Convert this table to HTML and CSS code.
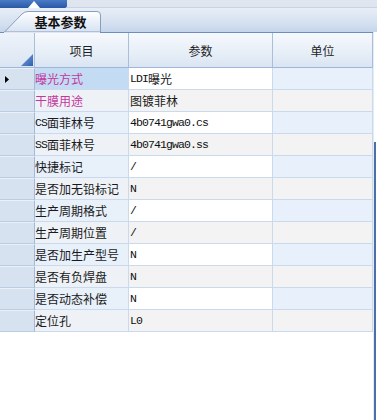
FILE: index.html
```html
<!DOCTYPE html>
<html lang="zh">
<head>
<meta charset="utf-8">
<link rel="stylesheet" href="styles.css">
</head>
<body>
<div class="page">
  <div class="topbar">
    <div class="topbar-blue">
      <svg class="tri" width="12" height="7" viewBox="0 0 12 7"><polygon points="6,0 12,7 0,7" fill="#ffffff"/></svg>
    </div>
    <div class="topbar-rest"></div>
  </div>
  <div class="tabstrip">
    <div class="tab">
      <svg class="tab-shape" width="97" height="21" viewBox="0 0 97 21">
        <defs>
          <linearGradient id="tg" x1="0" y1="0" x2="0" y2="1">
            <stop offset="0" stop-color="#ffffff"/>
            <stop offset="1" stop-color="#d6e2f2"/>
          </linearGradient>
        </defs>
        <path d="M0.5 21 L18 3 Q20.5 0.5 24 0.5 L93 0.5 Q96.5 0.5 96.5 4 L96.5 21 Z" fill="url(#tg)" stroke="#8a9dba" stroke-width="1"/>
      </svg>
      <span class="tab-label">基本参数</span>
    </div>
  </div>
  <div class="body">
    <div class="gridwrap">
      <div class="topline"></div>
      <div class="grid">
        <div class="hc corner"><svg width="12" height="12" viewBox="0 0 12 12" class="corner-tri"><defs><linearGradient id="cg" x1="0" y1="0" x2="1" y2="1"><stop offset="0" stop-color="#7fa6de"/><stop offset="1" stop-color="#2f5fae"/></linearGradient></defs><polygon points="12,0 12,12 0,12" fill="url(#cg)"/></svg></div>
        <div class="hc">项目</div>
        <div class="hc">参数</div>
        <div class="hc">单位</div>

        <div class="rh"><svg width="4" height="7" viewBox="0 0 4 7"><polygon points="0,0 4,3.5 0,7" fill="#000"/></svg></div>
        <div class="c k sel mag">曝光方式</div>
        <div class="c v"><span class="m">LDI</span>曝光</div>
        <div class="c u"></div>

        <div class="rh"></div>
        <div class="c k alt mag">干膜用途</div>
        <div class="c v alt">图镀菲林</div>
        <div class="c u alt"></div>

        <div class="rh"></div>
        <div class="c k"><span class="m">CS</span>面菲林号</div>
        <div class="c v"><span class="m">4b0741gwa0.cs</span></div>
        <div class="c u"></div>

        <div class="rh"></div>
        <div class="c k alt"><span class="m">SS</span>面菲林号</div>
        <div class="c v alt"><span class="m">4b0741gwa0.ss</span></div>
        <div class="c u alt"></div>

        <div class="rh"></div>
        <div class="c k">快捷标记</div>
        <div class="c v"><span class="m">/</span></div>
        <div class="c u"></div>

        <div class="rh"></div>
        <div class="c k alt">是否加无铅标记</div>
        <div class="c v alt"><span class="m">N</span></div>
        <div class="c u alt"></div>

        <div class="rh"></div>
        <div class="c k">生产周期格式</div>
        <div class="c v"><span class="m">/</span></div>
        <div class="c u"></div>

        <div class="rh"></div>
        <div class="c k alt">生产周期位置</div>
        <div class="c v alt"><span class="m">/</span></div>
        <div class="c u alt"></div>

        <div class="rh"></div>
        <div class="c k">是否加生产型号</div>
        <div class="c v"><span class="m">N</span></div>
        <div class="c u"></div>

        <div class="rh"></div>
        <div class="c k alt">是否有负焊盘</div>
        <div class="c v alt"><span class="m">N</span></div>
        <div class="c u alt"></div>

        <div class="rh"></div>
        <div class="c k">是否动态补偿</div>
        <div class="c v"><span class="m">N</span></div>
        <div class="c u"></div>

        <div class="rh"></div>
        <div class="c k alt">定位孔</div>
        <div class="c v alt"><span class="m">L0</span></div>
        <div class="c u alt"></div>
      </div>
    </div>
    <div class="edge"><div class="edge-line"></div></div>
  </div>
</div>
</body>
</html>
```

FILE: styles.css
```css
html, body {
  margin: 0;
  padding: 0;
  background: #ffffff;
}
.page {
  width: 377px;
  height: 420px;
  overflow: hidden;
  display: flex;
  flex-direction: column;
  font-family: "Noto Sans CJK SC", "Liberation Sans", sans-serif;
  font-size: 12px;
  color: #1a1a1a;
}
.topbar {
  height: 8px;
  display: flex;
}
.topbar-blue {
  width: 67px;
  background: linear-gradient(#4a7cc6, #2a58a6);
  border-bottom-right-radius: 2px;
  display: flex;
  justify-content: center;
  align-items: flex-end;
}
.tri {
  display: block;
}
.topbar-rest {
  flex: 1;
  background: #dfe6ef;
  border-bottom: 1px solid #c9d4e3;
}
.tabstrip {
  height: 24px;
  background: linear-gradient(#e7eef7, #d3dfef 70%, #c4d4ea);
  display: flex;
  align-items: flex-end;
}
.tab {
  margin-left: 4px;
  width: 97px;
  height: 21px;
  display: grid;
}
.tab-shape, .tab-label {
  grid-area: 1 / 1;
}
.tab-shape {
  display: block;
}
.tab-label {
  justify-self: center;
  align-self: center;
  margin-left: 16px;
  font-weight: bold;
  font-size: 13px;
  color: #111;
  line-height: 21px;
}
.body {
  flex: 1;
  display: flex;
}
.gridwrap {
  width: 373px;
  display: flex;
  flex-direction: column;
}
.topline {
  height: 1px;
  background: linear-gradient(to right, #6d8cbf 0, #6d8cbf 4px, #dde7f4 4px, #dde7f4 100px, #6d8cbf 100px);
}
.grid {
  display: grid;
  grid-template-columns: 35px 94px 144px 100px;
  grid-auto-rows: 22px;
  grid-template-rows: 35px;
}
.hc {
  background: linear-gradient(#f6f9fd, #e9f0f8 50%, #dae5f3);
  border-right: 1px solid #a9bedb;
  border-bottom: 1px solid #9fb6d8;
  display: flex;
  align-items: center;
  justify-content: center;
  color: #1e1e1e;
  padding-top: 1px;
  box-sizing: border-box;
}
.corner {
  justify-content: flex-end;
  align-items: flex-end;
  padding: 0 1px 1px 0;
  background: linear-gradient(#eef3fa, #dbe5f2);
}
.corner-tri {
  display: block;
}
.rh {
  background: #d7e2f0;
  border-right: 1px solid #a3b9d9;
  border-bottom: 1px solid #bccde3;
  border-top: 1px solid #eaf0f8;
  box-sizing: border-box;
  display: flex;
  align-items: center;
  padding-left: 5px;
}
.c {
  border-right: 1px solid #c9d9ee;
  border-bottom: 1px solid #c9d9ee;
  box-sizing: border-box;
  display: flex;
  align-items: center;
  padding-left: 1px;
  white-space: nowrap;
  overflow: hidden;
  line-height: 21px;
}
.k { background: #e8f0fa; padding-left: 0; }
.k.alt { background: #eef2f7; }
.k.sel { background: #c4dbf4; }
.v { background: #ffffff; }
.v.alt { background: #f3f3f3; }
.u { background: #e8f1fb; }
.u.alt { background: #f3f3f3; }
.mag { color: #c2389c; }
.m {
  font-family: "Liberation Mono", monospace;
  font-size: 11.5px;
  letter-spacing: -0.9px;
  color: #111;
}
.mag .m { color: inherit; }
.edge {
  width: 4px;
  display: flex;
  flex-direction: column;
  background: linear-gradient(to right, #e3ebf5 0, #e3ebf5 1px, transparent 1px);
}
.edge-line {
  margin-top: 110px;
  margin-left: 1px;
  width: 2px;
  flex: 1;
  background: #4d6fa8;
}
```
